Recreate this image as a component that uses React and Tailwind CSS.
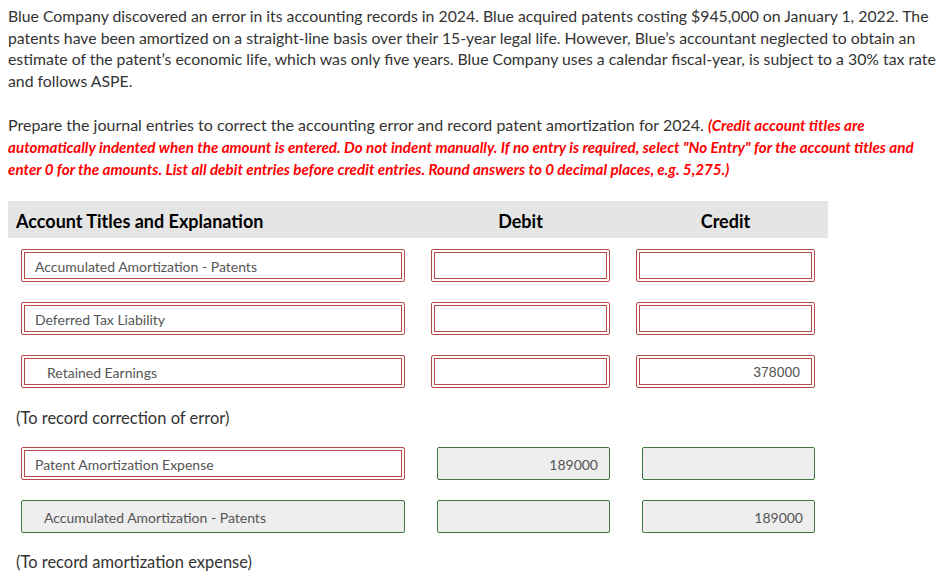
const rows1 = [
  { title: "Accumulated Amortization - Patents", indent: false, debit: "", credit: "", state: "red" },
  { title: "Deferred Tax Liability", indent: false, debit: "", credit: "", state: "red" },
  { title: "Retained Earnings", indent: true, debit: "", credit: "378000", state: "red" },
];

const rows2 = [
  { title: "Patent Amortization Expense", indent: false, debit: "189000", credit: "", state: "mixed" },
  { title: "Accumulated Amortization - Patents", indent: true, debit: "", credit: "189000", state: "green" },
];

function RedBox({ children, className = "" }) {
  return (
    <div className={`h-[33px] border border-[#b94a48] rounded-[2px] p-[2px] ${className}`}>
      <div className="h-full border border-[#b94a48] flex items-center pt-[2px]">{children}</div>
    </div>
  );
}

function GreenBox({ children, className = "" }) {
  return (
    <div className={`h-[33px] border border-[#3c763d] rounded-[2px] bg-[#eeeeee] flex items-center pt-[1px] ${className}`}>
      {children}
    </div>
  );
}

function Row({ row }) {
  const acctGreen = row.state === "green";
  const amtGreen = row.state !== "red";
  const Acct = acctGreen ? GreenBox : RedBox;
  return (
    <div className="grid grid-cols-[410px_205px_205px]">
      <div className="pl-[13px]">
        <Acct className="w-[384px]">
          <span className={`text-[14px] text-[#555] ${row.indent ? "pl-[22px]" : "pl-[10px]"}`}>
            {row.title}
          </span>
        </Acct>
      </div>
      {[row.debit, row.credit].map((v, i) =>
        amtGreen ? (
          <div key={i} className="pl-[19px]">
            <GreenBox className="w-[173px] justify-end pr-[11px]">
              <span className="text-[14px] text-[#555]">{v}</span>
            </GreenBox>
          </div>
        ) : (
          <div key={i} className="pl-[13px]">
            <RedBox className="w-[179px]">
              <span className="ml-auto pr-[11px] text-[14px] text-[#555] font-['Liberation_Sans',Arial,sans-serif]">
                {v}
              </span>
            </RedBox>
          </div>
        )
      )}
    </div>
  );
}

export default function App() {
  return (
    <div className="font-['Lato',sans-serif] text-[#333] bg-white min-h-screen pl-2 pt-[5px] overflow-hidden">
      <p className="w-[935px] text-[15.8px] leading-[21.5px]">
        Blue Company discovered an error in its accounting records in 2024. Blue acquired patents costing $945,000 on
        January 1, 2022. The patents have been amortized on a straight-line basis over their 15-year legal life.
        However, Blue’s accountant neglected to obtain an estimate of the patent’s economic life, which was only five
        years. Blue Company uses a calendar fiscal-year, is subject to a 30% tax rate and follows ASPE.
      </p>

      <p className="w-[927px] text-[16px] leading-[21px] mt-[23px]">
        Prepare the journal entries to correct the accounting error and record patent amortization for 2024.{" "}
        <span className="text-[#ff0000] font-bold italic text-[15.2px] leading-[21px]">
          (Credit account titles are automatically indented when the amount is entered. Do not indent manually. If no
          entry is required, select "No Entry" for the account titles and enter 0 for the amounts. List all debit
          entries before credit entries. Round answers to 0 decimal places, e.g. 5,275.)
        </span>
      </p>

      <div className="w-[820px] mt-[21px]">
        <div className="grid grid-cols-[410px_205px_205px] h-[37px] bg-[#e5e5e5] items-center pt-[3px] text-[18px] font-bold text-black">
          <div className="pl-2">Account Titles and Explanation</div>
          <div className="text-center">Debit</div>
          <div className="text-center">Credit</div>
        </div>

        <div className="flex flex-col gap-[20px] mt-[11px]">
          {rows1.map((r, i) => (
            <Row key={i} row={r} />
          ))}
        </div>

        <p className="text-[16.5px] leading-[24px] pl-2 mt-[18px]">(To record correction of error)</p>

        <div className="flex flex-col gap-[20px] mt-[17px]">
          {rows2.map((r, i) => (
            <Row key={i} row={r} />
          ))}
        </div>

        <p className="text-[16.5px] leading-[24px] pl-2 mt-[17px]">(To record amortization expense)</p>
      </div>
    </div>
  );
}
